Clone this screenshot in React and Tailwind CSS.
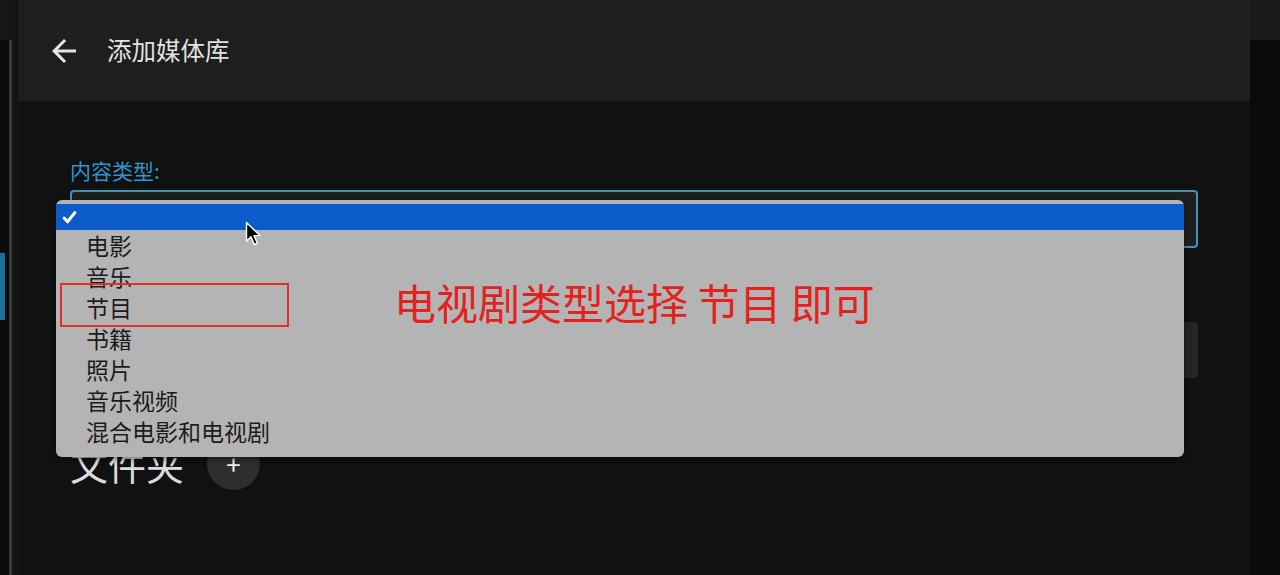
import React from 'react';

const menuItems = ['电影', '音乐', '节目', '书籍', '照片', '音乐视频', '混合电影和电视剧'];

const App = () => {
  return (
    <div className="relative w-[1280px] h-[575px] flex bg-[#111111] overflow-hidden font-['Noto_Sans_CJK_SC','Noto_Sans',sans-serif]">
      {/* left rail */}
      <div className="w-[18px] flex flex-shrink-0">
        <div className="w-[9px] flex flex-col bg-[#0b0b0b]">
          <div className="h-[40px] bg-[#161616]" />
          <div className="h-[213px]" />
          <div className="h-[67px] w-[5px] bg-[#1b6fa0]" />
        </div>
        <div className="w-[3px] flex flex-col">
          <div className="h-[40px] bg-[#161616]" />
          <div className="flex-1 bg-[#3a3a3a]" />
        </div>
        <div className="w-[6px] bg-[#141414]" />
      </div>

      {/* main dialog */}
      <div className="flex-1 flex flex-col">
        <div className="h-[101px] bg-[#1e1e1e] flex items-center pl-[28px] flex-shrink-0">
          <svg className="w-[36px] h-[36px] text-[#e4e4e4]" viewBox="0 0 24 24" fill="currentColor">
            <path d="M20 11H7.83l5.59-5.59L12 4l-8 8 8 8 1.41-1.41L7.83 13H20v-2z" />
          </svg>
          <span className="ml-[25px] text-[24.5px] leading-none text-[#e2e2e2]">添加媒体库</span>
        </div>

        <div className="flex-1 px-[52px] pt-[56px]">
          <div className="text-[21px] leading-[26px] text-[#2f95cc]">内容类型:</div>
          <div className="mt-[7px] h-[58px] rounded-[4px] border-2 border-[#3a95c0] bg-[#1f1f1f]" />
          {/* display name field, hidden under the open menu */}
          <div className="mt-[74px] h-[56px] rounded-[4px] bg-[#262626]" />
          <div className="mt-[59px] flex items-center">
            <span className="text-[38px] leading-none text-[#dcdcdc]">文件夹</span>
            <div className="ml-[23px] w-[53px] h-[53px] rounded-full bg-[#2e2e2e] flex items-center justify-center text-[26px] leading-none text-[#eeeeee]">
              +
            </div>
          </div>
        </div>
      </div>

      {/* right strip */}
      <div className="w-[30px] flex flex-col flex-shrink-0 bg-[#0a0a0a]">
        <div className="h-[40px] bg-[#1a1a1a]" />
      </div>

      {/* open select menu */}
      <div className="absolute left-[56px] top-[200px] w-[1128px] h-[257px] rounded-[6px] bg-[#b4b4b4] pt-[4px] shadow-[0_2px_6px_rgba(0,0,0,0.5)]">
        <div className="h-[26px] bg-[#0b5bcb] flex items-center pl-[6px]">
          <svg className="w-[15px] h-[15px]" viewBox="0 0 14 14" fill="none" stroke="#ffffff" strokeWidth={2.8} strokeLinecap="round" strokeLinejoin="round">
            <path d="M2 7.5l3.2 3.5L12 2.5" />
          </svg>
        </div>
        {menuItems.map((item) => (
          <div key={item} className="h-[31px] flex items-center pl-[30px] text-[23px] leading-none text-[#1c1c1c]">
            {item}
          </div>
        ))}
      </div>

      {/* annotation */}
      <div className="absolute left-[60px] top-[283px] w-[229px] h-[44px] border-2 border-[#e0302a]" />
      <div className="absolute left-[394px] top-[278px] text-[42px] leading-[48px] text-[#e3221f] whitespace-pre">
        电视剧类型选择 节目 即可
      </div>

      {/* mouse pointer */}
      <svg className="absolute left-[245px] top-[221px] w-[18px] h-[26px]" viewBox="0 0 18 26">
        <path d="M1.5 1.5 L1.5 20 L6 15.8 L9.3 23.5 L12.3 22.2 L9 14.6 L15 14.6 Z" fill="#000000" stroke="#ffffff" strokeWidth={1.4} strokeLinejoin="round" />
      </svg>
    </div>
  );
};

export default App;
